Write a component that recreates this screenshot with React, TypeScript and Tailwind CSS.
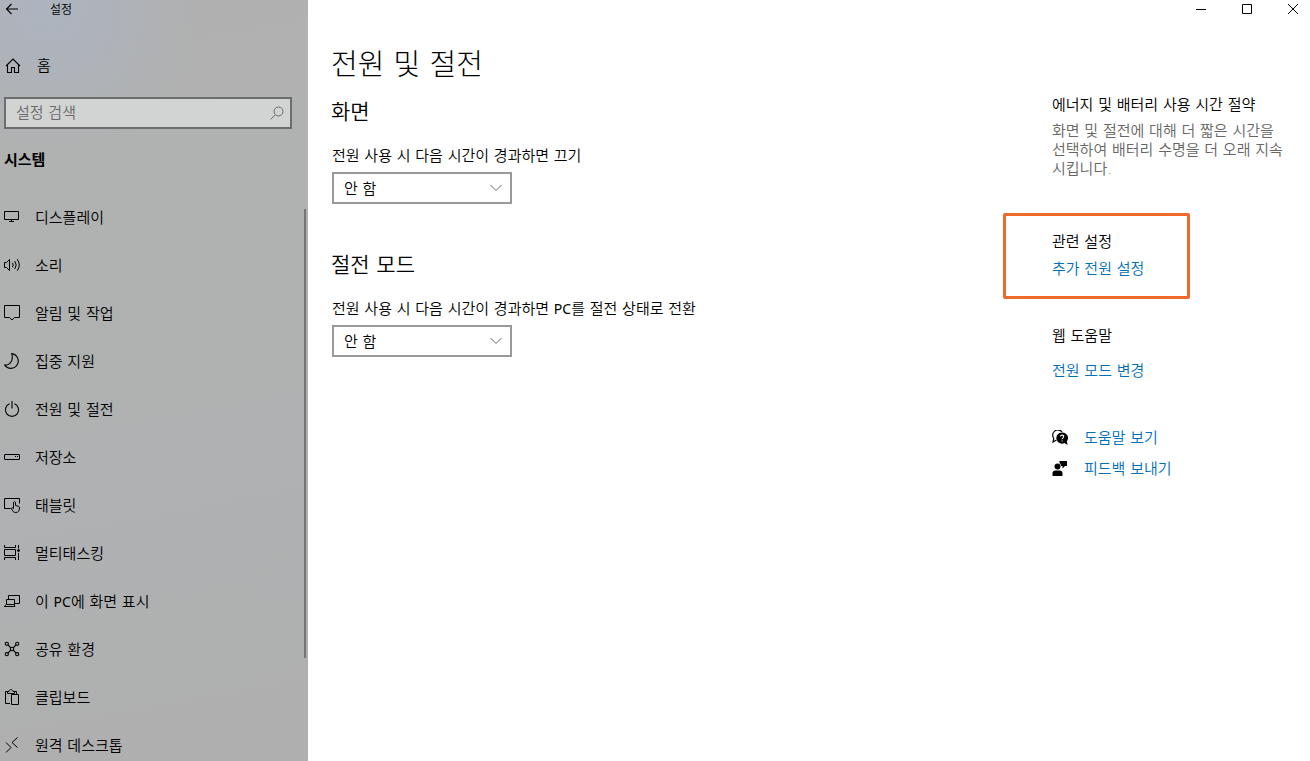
import clsx from "clsx";
import { useId, useState, type ReactNode } from "react";

const navItems: { href: string; icon: ReactNode; label: ReactNode }[] = [
  {
    href: "#display",
    label: "디스플레이",
    icon: <path d="M.5 2.500h14v8H.5zM7.500 10.500v2M5 12.500h5" />,
  },
  {
    href: "#sound",
    label: "소리",
    icon: (
      <>
        <path d="M.5 5.500h2l3-3v11l-3-3h-2z" />
        <path d="M8.500 5.800q1.400 2.200 0 4.400M10.800 4q2.800 4 0 8M13.200 2.200q4.200 5.800 0 11.600" />
      </>
    ),
  },
  {
    href: "#notifications",
    label: "알림 및 작업",
    icon: <path d="M.5.5h15v12h-5L8 15l-2.500-2.500h-5z" />,
  },
  {
    href: "#focus",
    label: "집중 지원",
    icon: <path d="M7.700.6a7.400 7.400 0 1 1-7 11.500C6 12.200 9.800 7.500 7.700.6z" strokeWidth="1.100" />,
  },
  {
    href: "#power",
    label: "전원 및 절전",
    icon: <path d="M8 0v7.500M5.500 2.700a6.600 6.600 0 1 0 5 0" strokeWidth="1.100" />,
  },
  {
    href: "#storage",
    label: "저장소",
    icon: (
      <>
        <rect x=".5" y="5.500" width="15" height="5" rx=".5" />
        <path d="M11 7.500h1M13 7.500h1" />
      </>
    ),
  },
  {
    href: "#tablet",
    label: "태블릿",
    icon: (
      <>
        <path d="M6.500 11.500h-6v-10h15v5" />
        <path d="M9.500 11.500V5.300q1-1.600 2 0v3.200l2.800.7q1.200.4 1.200 1.800c0 2.800-1.200 4.500-3.800 4.500-2.400 0-3.200-1.500-4.400-4.200q.6-1.500 2.200.2" />
      </>
    ),
  },
  {
    href: "#multitasking",
    label: "멀티태스킹",
    icon: (
      <>
        <path d="M.5 0v2.500h11V0M.5 4.500h11v6H.5zM.5 15v-2.500h11V15M14.500 0v3.500M14.500 8v7" />
        <circle cx="14.500" cy="5.500" r="1" fill="currentColor" />
      </>
    ),
  },
  {
    href: "#project",
    label: (
      <>
        이 <Latin>PC</Latin>에 화면 표시
      </>
    ),
    icon: <path d="M4.500 6.500v-4h11v8h-5M2.500 6.500h8v5h-8zM.5 13.500l1.500-2M0 13.500h11l-1-2" />,
  },
  {
    href: "#shared",
    label: "공유 환경",
    icon: (
      <g strokeWidth="1.100">
        <circle cx="2.800" cy="2.800" r="1.600" />
        <circle cx="13.200" cy="2.800" r="1.600" />
        <circle cx="2.800" cy="13.200" r="1.600" />
        <circle cx="13.200" cy="13.200" r="1.600" />
        <circle cx="8" cy="8" r="1.700" />
        <path d="M4 4l2.800 2.800M12 4L9.200 6.800M4 12l2.800-2.800M12 12L9.200 9.200" />
      </g>
    ),
  },
  {
    href: "#clipboard",
    label: "클립보드",
    icon: <path d="M6 14.500H1.500v-12h3M9.500 2.500h3V5M3.500 4.500h7v-2H9C9 0 5 0 5 2.500H3.500zM7.500 5.500h7v10h-7z" />,
  },
  {
    href: "#remote",
    label: "원격 데스크톱",
    icon: <path d="M2 5.500l5 5-5 5M13.500.5l-5.500 5 5.500 5" />,
  },
];

export default function App() {
  return (
    <div className="flex h-screen overflow-hidden bg-white font-['DejaVu_Sans','Noto_Sans_CJK_KR',sans-serif] text-[15px] font-[350] leading-5 text-black">
      <Sidebar />
      <div className="flex min-w-0 flex-1 flex-col">
        <WindowControls />
        <div className="flex flex-1 justify-between gap-8 pl-[23px] pr-5">
          <main className="min-w-0 pt-[27px]">
            <h1 className="text-[29px] font-light leading-10">전원 및 절전</h1>
            <TimeoutSetting className="mt-[13px]" title="화면" label="전원 사용 시 다음 시간이 경과하면 끄기" />
            <TimeoutSetting
              className="mt-[47px]"
              title="절전 모드"
              label={
                <>
                  전원 사용 시 다음 시간이 경과하면 <Latin>PC</Latin>를 절전 상태로 전환
                </>
              }
            />
          </main>
          <RelatedPanel />
        </div>
      </div>
    </div>
  );
}

function Sidebar() {
  const [query, setQuery] = useState("");

  return (
    <aside className="flex w-[308px] shrink-0 flex-col bg-[#b0b1b1] bg-[radial-gradient(circle_at_50px_10px,#adb4bf_0,transparent_150px),linear-gradient(170deg,#b0b0b0_0%,#b0b2b1_35%,#afb1b2_60%,#afafaf_100%)]">
      <header className="flex h-[18px] items-center pl-1">
        <button aria-label="뒤로" type="button">
          <Icon>
            <path d="M14 8H2.500M7.500 3l-5 5 5 5" strokeWidth="1.100" />
          </Icon>
        </button>
        <span className="ml-[30px] pt-0.5 text-xs">설정</span>
      </header>

      <a className="mt-8 flex h-8 items-center gap-4 pl-[5px]" href="#home">
        <Icon>
          <path d="M1 8l7-7 7 7M2.500 6.800v7.700h4v-5h3v5h4V6.800" strokeWidth="1.100" />
        </Icon>
        홈
      </a>

      <label className="ml-1 mr-4 mt-[15px] flex h-8 items-center border-2 border-[#6c6d6d] bg-[#d2d3d3] pl-[10px] pr-[5px]">
        <input
          aria-label="설정 검색"
          className="min-w-0 flex-1 bg-transparent outline-none placeholder:text-[#6a6a6a]"
          onChange={(event) => setQuery(event.target.value)}
          placeholder="설정 검색"
          type="text"
          value={query}
        />
        <Icon className="text-[#6a6a6a]">
          <circle cx="9.500" cy="6.500" r="4.500" />
          <path d="M6.200 9.800L1.500 14.500" />
        </Icon>
      </label>

      <h2 className="ml-1 mt-[21px] font-bold">시스템</h2>

      <div className="mt-[23px] flex min-h-0 flex-1">
        <nav className="min-w-0 flex-1 overflow-hidden">
          {navItems.map((item) => (
            <a className="flex h-12 items-center gap-[15px] pl-1" href={item.href} key={item.href}>
              <Icon>{item.icon}</Icon>
              <span className="pt-0.5">{item.label}</span>
            </a>
          ))}
        </nav>
        <div className="mr-[2px] mt-4 h-[79%] w-[2px] bg-[#747574]" />
      </div>
    </aside>
  );
}

function WindowControls() {
  return (
    <header className="flex h-[18px] items-center justify-end gap-9 pr-3">
      <button aria-label="최소화" type="button">
        <svg className="block h-[10px] w-[10px]" viewBox="0 0 10 10" stroke="currentColor" fill="none">
          <path d="M0 5.500h10" />
        </svg>
      </button>
      <button aria-label="최대화" type="button">
        <svg className="block h-[10px] w-[10px]" viewBox="0 0 10 10" stroke="currentColor" fill="none">
          <path d="M.5.5h9v9h-9z" />
        </svg>
      </button>
      <button aria-label="닫기" type="button">
        <svg className="block h-[10px] w-[10px]" viewBox="0 0 10 10" stroke="currentColor" fill="none">
          <path d="M0 0l10 10M10 0L0 10" />
        </svg>
      </button>
    </header>
  );
}

function TimeoutSetting({ className, label, title }: { className?: string; label: ReactNode; title: string }) {
  const selectId = useId();

  return (
    <section className={className}>
      <h2 className="text-[21px] leading-7">{title}</h2>
      <label className="ml-px mt-5 block" htmlFor={selectId}>
        {label}
      </label>
      <div className="relative ml-px mt-[6px] w-[180px]">
        <select
          className="block h-8 w-full appearance-none border-2 border-[#999] bg-white pl-[10px] pr-8 pt-0.5 outline-none"
          defaultValue="never"
          id={selectId}
        >
          <option value="never">안 함</option>
        </select>
        <svg
          aria-hidden="true"
          className="pointer-events-none absolute right-[10px] top-3 h-2 w-3"
          viewBox="0 0 12 8"
          stroke="#666"
          fill="none"
        >
          <path d="M.5 1L6 6.500 11.500 1" />
        </svg>
      </div>
    </section>
  );
}

function RelatedPanel() {
  return (
    <aside className="w-[238px] shrink-0 pt-[77px]">
      <h3>에너지 및 배터리 사용 시간 절약</h3>
      <p className="mt-[7px] leading-[19px] text-[#666]">
        화면 및 절전에 대해 더 짧은 시간을 선택하여 배터리 수명을 더 오래 지속시킵니다.
      </p>

      <section className="relative mt-[53px]">
        <h3>관련 설정</h3>
        <BlueLink className="mt-[7px]">추가 전원 설정</BlueLink>
        <span className="pointer-events-none absolute -bottom-5 -left-[49px] -top-[19px] w-[187px] rounded-xs border-3 border-[#f06a2c]" />
      </section>

      <section className="mt-[47px]">
        <h3>웹 도움말</h3>
        <BlueLink className="mt-[15px]">전원 모드 변경</BlueLink>
      </section>

      <div className="mt-[47px] flex items-center gap-4">
        <Icon>
          <path d="M4.500 10l-3.500 2 .8-3.500A5 5 0 1 1 10 2" strokeWidth="1.200" />
          <path
            d="M10 2.400a5.600 5.600 0 1 0 2.500 10.600l3.200 1.900-.9-3.500A5.600 5.600 0 0 0 10 2.400z"
            fill="currentColor"
            stroke="none"
          />
          <path d="M8.500 6.600c0-2 3.200-2 3.200 0 0 1.300-1.600 1.200-1.600 2.700M10.100 10.400v1.200" stroke="#fff" strokeWidth="1.100" />
        </Icon>
        <BlueLink>도움말 보기</BlueLink>
      </div>
      <div className="mt-[11px] flex items-center gap-4">
        <Icon>
          <g fill="currentColor" stroke="none">
            <circle cx="5.500" cy="5.500" r="3" />
            <path d="M.5 15v-2.500Q.5 9.500 3.500 9.500h4q3 0 3 3V15zM7.500 0H15v5h-2l-2.500 2.500V5H9Q9 3 7.500 2z" />
          </g>
        </Icon>
        <BlueLink>피드백 보내기</BlueLink>
      </div>
    </aside>
  );
}

function BlueLink({ children, className }: { children: ReactNode; className?: string }) {
  return (
    <a className={clsx("block text-[#006fb8]", className)} href="#link">
      {children}
    </a>
  );
}

function Latin({ children }: { children: ReactNode }) {
  return <span className="font-['Noto_Sans',sans-serif] text-sm leading-none font-normal">{children}</span>;
}

function Icon({ children, className }: { children: ReactNode; className?: string }) {
  return (
    <svg
      aria-hidden="true"
      className={clsx("block size-4 shrink-0", className)}
      fill="none"
      stroke="currentColor"
      viewBox="0 0 16 16"
    >
      {children}
    </svg>
  );
}
